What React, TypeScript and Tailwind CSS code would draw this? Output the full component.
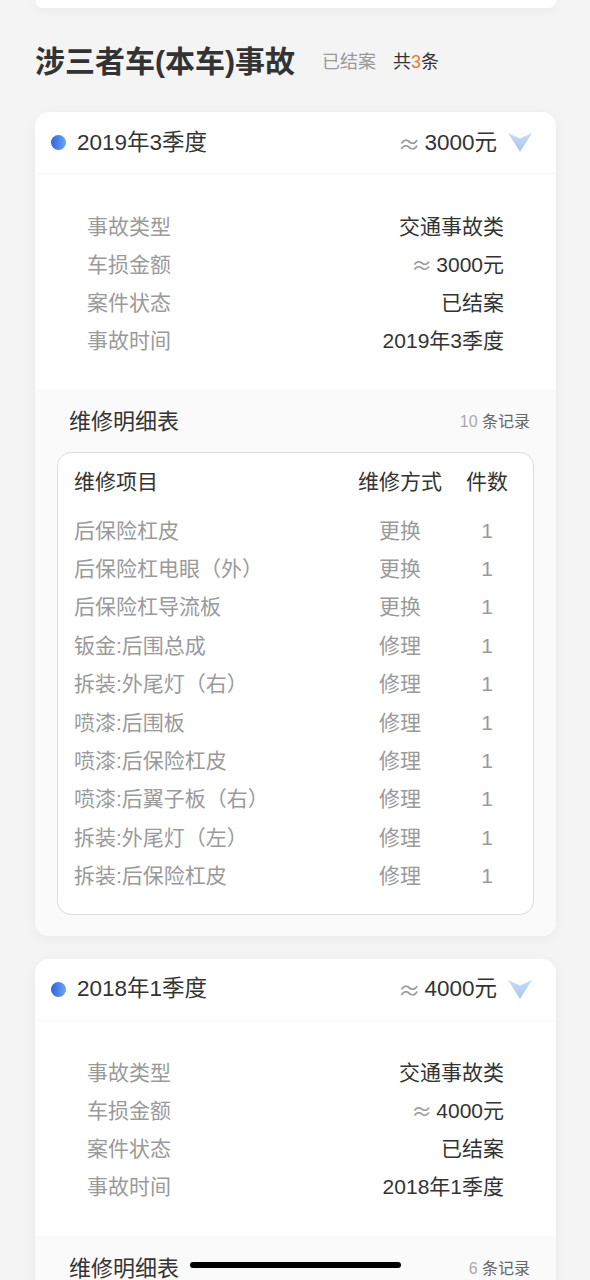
import React from "react";

type Repair = { name: string; way: string; count: number };

type Accident = {
  period: string;
  amount: string;
  type: string;
  status: string;
  repairs: Repair[];
};

const accidents: Accident[] = [
  {
    period: "2019年3季度",
    amount: "3000元",
    type: "交通事故类",
    status: "已结案",
    repairs: [
      { name: "后保险杠皮", way: "更换", count: 1 },
      { name: "后保险杠电眼（外）", way: "更换", count: 1 },
      { name: "后保险杠导流板", way: "更换", count: 1 },
      { name: "钣金:后围总成", way: "修理", count: 1 },
      { name: "拆装:外尾灯（右）", way: "修理", count: 1 },
      { name: "喷漆:后围板", way: "修理", count: 1 },
      { name: "喷漆:后保险杠皮", way: "修理", count: 1 },
      { name: "喷漆:后翼子板（右）", way: "修理", count: 1 },
      { name: "拆装:外尾灯（左）", way: "修理", count: 1 },
      { name: "拆装:后保险杠皮", way: "修理", count: 1 },
    ],
  },
  {
    period: "2018年1季度",
    amount: "4000元",
    type: "交通事故类",
    status: "已结案",
    repairs: [
      { name: "前保险杠皮", way: "更换", count: 1 },
      { name: "喷漆:前保险杠皮", way: "修理", count: 1 },
      { name: "拆装:前大灯（左）", way: "修理", count: 1 },
      { name: "钣金:前翼子板（左）", way: "修理", count: 1 },
      { name: "喷漆:前翼子板（左）", way: "修理", count: 1 },
      { name: "拆装:前保险杠皮", way: "修理", count: 1 },
    ],
  },
];

const Chevron: React.FC = () => (
  <svg width="24" height="19" viewBox="0 0 24 19" className="ml-[11px]">
    <defs>
      <linearGradient id="chev" x1="0" y1="0" x2="0" y2="1">
        <stop offset="0" stopColor="#cadcf5" />
        <stop offset="1" stopColor="#a8c5ee" />
      </linearGradient>
    </defs>
    <path d="M0 0 L12 5.5 L24 0 L12 19 Z" fill="url(#chev)" />
  </svg>
);

const Approx: React.FC<{ value: string }> = ({ value }) => (
  <span className="flex items-center">
    <span className="mr-[4px] text-[#9a9a9a] font-['Noto_Sans_CJK_SC',sans-serif]">≈</span>
    <span className="text-[#333]">{value}</span>
  </span>
);

const AccidentCard: React.FC<{ data: Accident }> = ({ data }) => {
  const info = [
    { label: "事故类型", value: <span>{data.type}</span> },
    { label: "车损金额", value: <Approx value={data.amount} /> },
    { label: "案件状态", value: <span>{data.status}</span> },
    { label: "事故时间", value: <span>{data.period}</span> },
  ];

  return (
    <div className="mx-[35px] w-[521px] overflow-hidden rounded-[14px] bg-white shadow-[0_2px_12px_rgba(0,0,0,0.05)]">
      <div className="flex h-[62px] items-center justify-between border-b border-[#f6f6f6] pl-[16px] pr-[24px]">
        <div className="flex items-center">
          <span className="h-[15px] w-[15px] rounded-full bg-gradient-to-r from-[#2a66dc] to-[#6fa3f3]" />
          <span className="ml-[11px] text-[22.5px] leading-[30px] text-[#333]">{data.period}</span>
        </div>
        <div className="flex items-center text-[22.5px] leading-[30px]">
          <Approx value={data.amount} />
          <Chevron />
        </div>
      </div>

      <div className="px-[52px] pt-[33px] pb-[30px]">
        {info.map((row) => (
          <div key={row.label} className="flex h-[38px] items-center justify-between text-[21px]">
            <span className="text-[#9a9a9a]">{row.label}</span>
            <span className="text-[#333]">{row.value}</span>
          </div>
        ))}
      </div>

      <div className="bg-[#fafafa] px-[22px] pt-[17px] pb-[21px]">
        <div className="flex h-[32px] items-center justify-between pl-[12px] pr-[4px]">
          <span className="text-[22px] text-[#333]">维修明细表</span>
          <span className="text-[16px]">
            <span className="text-[#aaa]">{data.repairs.length}</span>
            <span className="text-[#666]"> 条记录</span>
          </span>
        </div>

        <div className="mt-[14px] rounded-[14px] border border-[#dcdcdc] bg-white pt-[9px] pb-[19px] pl-[16px] pr-[24px]">
          <div className="grid h-[38px] grid-cols-[1fr_86px_44px] items-center gap-x-[22px] text-[21px] text-[#333]">
            <span>维修项目</span>
            <span className="text-center">维修方式</span>
            <span className="text-center">件数</span>
          </div>
          <div className="mt-[11px]">
            {data.repairs.map((r, i) => (
              <div
                key={i}
                className="grid h-[38.4px] grid-cols-[1fr_86px_44px] items-center gap-x-[22px] text-[21px] text-[#9a9a9a]"
              >
                <span>{r.name}</span>
                <span className="text-center">{r.way}</span>
                <span className="text-center">{r.count}</span>
              </div>
            ))}
          </div>
        </div>
      </div>
    </div>
  );
};

export default function App() {
  return (
    <div className="relative min-h-screen w-[590px] bg-[#f4f4f4] pb-[40px] font-['Liberation_Sans','Noto_Sans_CJK_SC',sans-serif] leading-none">
      <div className="mx-[35px] h-[8px] w-[521px] rounded-b-[14px] bg-white shadow-[0_2px_12px_rgba(0,0,0,0.05)]" />

      <div className="flex h-[104px] items-center pl-[35px] pt-[4px]">
        <span className="text-[30px] font-bold text-[#333]">涉三者车(本车)事故</span>
        <span className="ml-[27px] text-[18px] text-[#9a9a9a]">已结案</span>
        <span className="ml-[17px] text-[18px] text-[#333]">
          共<span className="text-[#e8743b]">3</span>条
        </span>
      </div>

      <div className="flex flex-col gap-[23px]">
        {accidents.map((a) => (
          <AccidentCard key={a.period} data={a} />
        ))}
      </div>

      <div className="fixed bottom-[12px] left-[190px] h-[6px] w-[211px] rounded-full bg-black" />
    </div>
  );
}
